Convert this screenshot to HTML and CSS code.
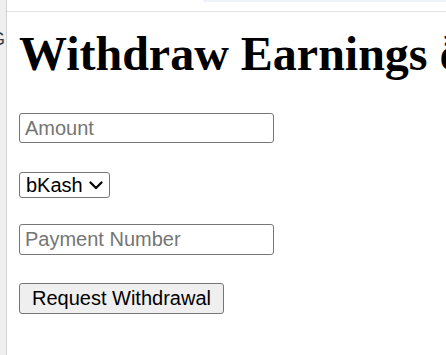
FILE: index.html
```html
<!DOCTYPE html>
<html lang="en">
<head>
<meta charset="utf-8">
<title>Withdraw Earnings</title>
<link rel="stylesheet" href="styles.css">
</head>
<body>
<div class="window">
  <aside class="sidebar"><span class="sidebar-letter">G</span></aside>
  <div class="main">
    <div class="topbar"><div class="tab-edge"></div></div>
    <div class="content">
      <h1 class="title">Withdraw Earnings ðŸ’°</h1>
      <form class="form">
        <input class="field field-amount" type="text" placeholder="Amount">
        <span class="select-wrap">
          <select class="select">
            <option>bKash</option>
            <option>Nagad</option>
            <option>Rocket</option>
          </select>
          <svg class="chevron" width="14" height="9" viewBox="0 0 14 9" aria-hidden="true"><path d="M1.5 1.5 L7 7 L12.5 1.5" fill="none" stroke="#000" stroke-width="2.2" stroke-linecap="round" stroke-linejoin="round"/></svg>
        </span>
        <input class="field field-number" type="text" placeholder="Payment Number">
        <button class="button" type="button">Request Withdrawal</button>
      </form>
    </div>
  </div>
</div>
</body>
</html>
```
FILE: styles.css
```css
html, body {
  margin: 0;
  padding: 0;
  background: #ffffff;
  overflow: hidden;
}
.window {
  display: flex;
  width: 446px;
  height: 355px;
}
.sidebar {
  width: 6px;
  flex: 0 0 6px;
  background: #efefef;
  border-right: 1px solid #d2d2d2;
  overflow: hidden;
  padding-top: 29px;
  box-sizing: content-box;
}
.sidebar-letter {
  display: block;
  margin-left: -9px;
  font-family: "Liberation Sans", Arial, sans-serif;
  font-size: 18px;
  line-height: 20px;
  color: #3a3a3a;
}
.main {
  flex: 1;
  display: flex;
  flex-direction: column;
  min-width: 0;
}
.topbar {
  height: 11px;
  border-bottom: 1px solid #e2e2e2;
  display: flex;
  justify-content: flex-end;
  background: #ffffff;
}
.tab-edge {
  width: 243px;
  height: 2px;
  background: #eef1f8;
  border-bottom-left-radius: 6px;
}
.content {
  padding: 0 0 0 12px;
  min-width: 0;
  overflow: hidden;
}
.title {
  margin: 14px 0 32px 0;
  font-family: "Liberation Serif", "Times New Roman", serif;
  font-weight: bold;
  font-size: 48px;
  line-height: 55px;
  white-space: nowrap;
  color: #000;
}
.form {
  display: flex;
  flex-direction: column;
  align-items: flex-start;
}
.field {
  box-sizing: border-box;
  width: 255px;
  height: 30px;
  margin: 0;
  padding: 0 5px;
  border: 1px solid #767676;
  border-radius: 3px;
  font-family: "Liberation Sans", Arial, sans-serif;
  font-size: 20px;
  color: #000;
  background: #fff;
  outline: none;
}
.field::placeholder {
  color: #757575;
}
.field-number {
  margin-top: 26px;
  height: 31px;
}
.select-wrap {
  position: relative;
  display: block;
  margin-top: 29px;
}
.select {
  appearance: none;
  -webkit-appearance: none;
  box-sizing: border-box;
  width: 91px;
  height: 26px;
  margin: 0;
  padding: 0 0 0 6px;
  border: 1px solid #767676;
  border-radius: 3px;
  background: #fff;
  font-family: "Liberation Sans", Arial, sans-serif;
  font-size: 20px;
  color: #000;
  line-height: 24px;
}
.chevron {
  position: absolute;
  left: 70px;
  top: 9px;
  pointer-events: none;
}
.button {
  box-sizing: border-box;
  height: 31px;
  margin-top: 28px;
  padding: 0 12px;
  border: 1px solid #767676;
  border-radius: 3px;
  background: #efefef;
  font-family: "Liberation Sans", Arial, sans-serif;
  font-size: 20px;
  color: #000;
}
```
